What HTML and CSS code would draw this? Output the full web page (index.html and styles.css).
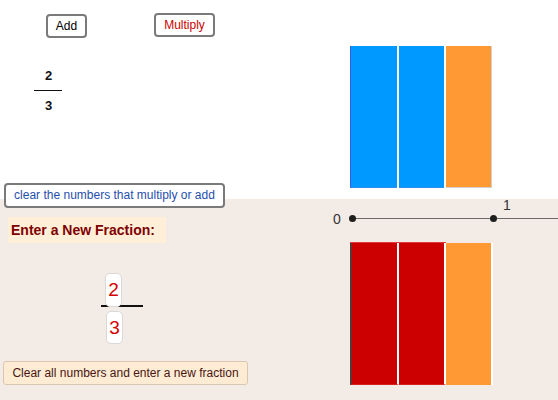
FILE: index.html
```html
<!DOCTYPE html>
<html lang="en">
<head>
<meta charset="utf-8">
<title>Fraction bars</title>
<link rel="stylesheet" href="styles.css">
</head>
<body>
<div class="applet">
  <div class="left">
    <div class="ops">
      <button class="btn btn-add">Add</button>
      <button class="btn btn-mult">Multiply</button>
    </div>
    <div class="frac">
      <div class="num">2</div>
      <div class="frac-bar"></div>
      <div class="num">3</div>
    </div>
    <button class="btn btn-clear">clear the numbers that multiply or add</button>
    <div class="enter">Enter a New Fraction:</div>
    <div class="infrac">
      <div class="inbox inbox-top">2</div>
      <div class="infrac-bar"></div>
      <div class="inbox inbox-bottom">3</div>
    </div>
    <button class="btn-clearall">Clear all numbers and enter a new fraction</button>
  </div>
  <div class="right">
    <div class="bars bars-top">
      <div class="bar blue first"></div>
      <div class="bar blue"></div>
      <div class="bar orange"></div>
    </div>
    <div class="numline">
      <span class="tick-label">0</span>
      <div class="axis">
        <span class="dot dot-zero"></span>
        <span class="dot dot-one"></span>
        <span class="one-label">1</span>
      </div>
    </div>
    <div class="bars bars-bottom">
      <div class="red-group">
        <div class="bar red first"></div>
        <div class="bar red"></div>
      </div>
      <div class="bar orange"></div>
    </div>
  </div>
</div>
</body>
</html>
```
FILE: styles.css
```css
* { box-sizing: border-box; }

html, body {
  margin: 0;
  padding: 0;
  background: #f3ebe5;
}

.applet {
  width: 558px;
  height: 400px;
  overflow: hidden;
  display: grid;
  grid-template-columns: 333px 1fr;
  font-family: "Liberation Sans", Arial, sans-serif;
  background: linear-gradient(to bottom, #ffffff 0, #ffffff 199px, #f3ebe5 199px, #f3ebe5 100%);
}

/* ---------- left column ---------- */
.left {
  display: flex;
  flex-direction: column;
  align-items: flex-start;
}

.ops {
  display: flex;
  align-items: flex-start;
  height: 25px;
  margin-top: 13px;
  padding-left: 46px;
}

.btn {
  font-family: inherit;
  font-size: 12px;
  background: #ffffff;
  border: 2px solid #7a7a7a;
  border-radius: 4px;
  padding: 0;
  margin: 0;
  line-height: 19px;
  text-align: center;
  position: relative;
  z-index: 1;
}

.btn-add {
  width: 41px;
  height: 24px;
  margin-top: 1px;
  color: #000000;
}

.btn-mult {
  width: 61px;
  height: 24px;
  margin-left: 67px;
  color: #cc0000;
}

.frac {
  width: 28px;
  margin-top: 30px;
  margin-left: 34px;
  text-align: center;
  font-size: 13px;
  font-weight: bold;
  line-height: 15px;
  color: #111111;
}

.num { padding-left: 1px; }

.frac-bar {
  height: 1px;
  background: #111111;
  margin: 7px 0 7px;
}

.btn-clear {
  width: 221px;
  height: 25px;
  margin-top: 70px;
  margin-left: 4px;
  color: #1f4fae;
}

.enter {
  width: 158px;
  height: 26px;
  margin-top: 9px;
  margin-left: 8px;
  padding-left: 3px;
  background: #ffefd8;
  color: #800000;
  font-size: 14px;
  font-weight: bold;
  line-height: 26px;
}

.infrac {
  width: 42px;
  margin-top: 30px;
  margin-left: 101px;
  display: flex;
  flex-direction: column;
  align-items: flex-start;
}

.inbox {
  background: #ffffff;
  border: 1px solid #d9d9d9;
  border-radius: 5px;
  color: #d40000;
  font-size: 19px;
  text-align: center;
  position: relative;
  z-index: 1;
}

.inbox-top {
  width: 17px;
  height: 34px;
  line-height: 32px;
  margin-left: 4px;
}

.infrac-bar {
  width: 42px;
  height: 2px;
  margin-top: -2px;
  background: #111111;
}

.inbox-bottom {
  width: 17px;
  height: 33px;
  line-height: 31px;
  margin-top: 4px;
  margin-left: 5px;
}

.btn-clearall {
  width: 245px;
  height: 24px;
  margin-top: 17px;
  margin-left: 3px;
  padding: 0;
  font-family: inherit;
  font-size: 12px;
  color: #4a1414;
  background: #fdecd3;
  border: 1px solid #dac7b2;
  border-radius: 3px;
  text-align: center;
}

/* ---------- right column ---------- */
.right {
  display: flex;
  flex-direction: column;
  align-items: flex-start;
}

.bars {
  display: flex;
  margin-left: 17px;
}

.bars-top {
  margin-top: 46px;
  height: 142px;
  gap: 2px;
}

.bar { height: 100%; }

.bar.blue {
  width: 45px;
  background: #0099ff;
  border-bottom: 1px solid #2f8ff0;
}

.bars-top .bar.first {
  width: 47px;
  border-left: 1px solid #3a5ae8;
}

.bars-top .bar.orange {
  width: 46px;
  background: #ff9933;
  border-right: 1px solid #cfcfcf;
  border-bottom: 1px solid #cfcfcf;
}

.numline {
  display: flex;
  align-items: center;
  height: 16px;
  margin-top: 22px;
  width: 100%;
}

.tick-label {
  font-size: 14px;
  line-height: 16px;
  color: #333333;
  width: 19px;
  padding-top: 1px;
}

.axis {
  flex: 1;
  height: 1px;
  background: #6a6a6a;
  position: relative;
}

.dot {
  position: absolute;
  top: -3px;
  width: 7px;
  height: 7px;
  border-radius: 50%;
  background: #1e1e1e;
}

.dot-zero { left: -3px; }
.dot-one { left: 138px; }

.one-label {
  position: absolute;
  left: 151px;
  top: -21px;
  font-size: 14px;
  line-height: 16px;
  color: #333333;
}

.bars-bottom {
  margin-top: 16px;
  height: 143px;
}

.red-group {
  display: flex;
  height: 100%;
  border-top: 1px solid #e23a3a;
}

.bar.red {
  width: 47px;
  background: #cc0000;
  border-right: 2px solid #ffffff;
  border-bottom: 1px solid #d82020;
}

.bars-bottom .bar.first {
  width: 49px;
  border-left: 2px solid #5a3838;
}

.bars-bottom .bar.orange {
  width: 47px;
  height: 142px;
  margin-top: 1px;
  background: #ff9933;
  border-right: 2px solid #ffffff;
}
```
